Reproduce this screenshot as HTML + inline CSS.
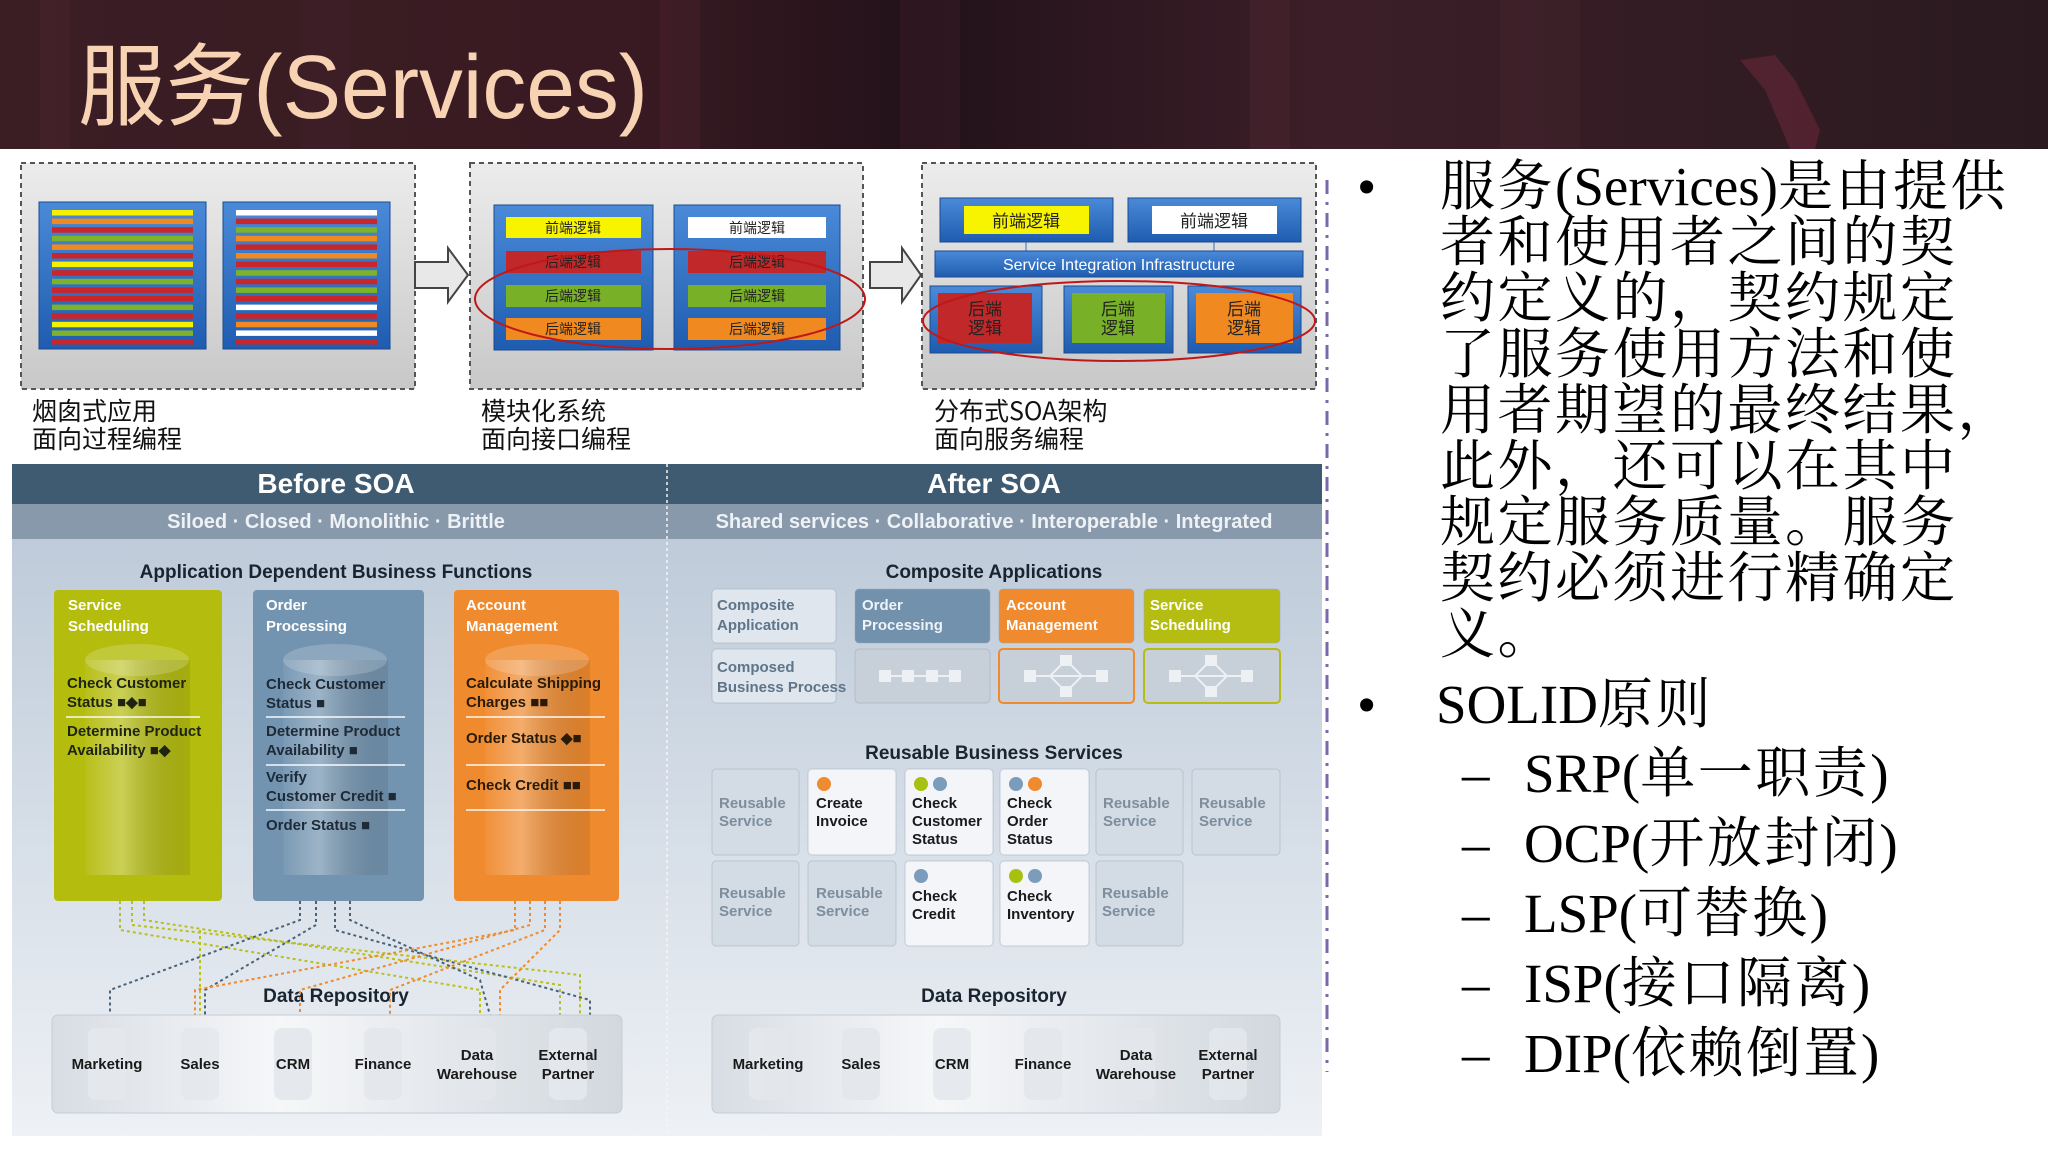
<!DOCTYPE html>
<html><head><meta charset="utf-8">
<style>
html,body{margin:0;padding:0;background:#fff;}
body{width:2048px;height:1151px;position:relative;overflow:hidden;}
svg{position:absolute;left:0;top:0;}
.rt{position:absolute;font-family:"Liberation Serif","Noto Serif CJK SC",serif;color:#000;font-size:55px;line-height:56px;white-space:nowrap;letter-spacing:2.5px;}
.rt span{letter-spacing:0;}
</style></head>
<body>
<svg width="2048" height="1151" viewBox="0 0 2048 1151" font-family="'Liberation Sans Narrow','Liberation Sans',sans-serif">
<defs>
<linearGradient id="hdr" x1="0" x2="1" y1="0" y2="0">
<stop offset="0" stop-color="#3a1e24"/><stop offset="0.3" stop-color="#3a1a22"/><stop offset="0.45" stop-color="#22121a"/><stop offset="0.65" stop-color="#3c1e28"/><stop offset="1" stop-color="#2a1a20"/>
</linearGradient>
<linearGradient id="gbox" x1="0" y1="0" x2="0" y2="1"><stop offset="0" stop-color="#ececec"/><stop offset="1" stop-color="#c8c8c8"/></linearGradient>
<linearGradient id="blue" x1="0" y1="0" x2="0" y2="1"><stop offset="0" stop-color="#4a8ad8"/><stop offset="1" stop-color="#1f5cb0"/></linearGradient>
<linearGradient id="body" x1="0" y1="0" x2="0" y2="1"><stop offset="0" stop-color="#b9c6d6"/><stop offset="0.5" stop-color="#d3dce6"/><stop offset="1" stop-color="#eef1f5"/></linearGradient>
<linearGradient id="cyl" x1="0" x2="1"><stop offset="0" stop-color="#fff" stop-opacity="0.05"/><stop offset="0.35" stop-color="#fff" stop-opacity="0.3"/><stop offset="1" stop-color="#000" stop-opacity="0.08"/></linearGradient>
<linearGradient id="rep" x1="0" x2="1"><stop offset="0" stop-color="#d8dde3"/><stop offset="0.4" stop-color="#f6f7f9"/><stop offset="1" stop-color="#d2d8de"/></linearGradient>
</defs>
<rect x="0" y="0" width="2048" height="149" fill="url(#hdr)"/>
<g opacity="0.25">
<rect x="40" y="0" width="30" height="149" fill="#5a2a34"/><rect x="300" y="0" width="50" height="149" fill="#4a2430"/><rect x="660" y="0" width="40" height="149" fill="#5a2836"/><rect x="900" y="0" width="60" height="149" fill="#4a2230"/><rect x="1250" y="0" width="40" height="149" fill="#5a2a36"/><rect x="1500" y="0" width="80" height="149" fill="#4e2a34"/>
</g>
<path d="M1740 60 L1775 55 L1795 80 L1820 130 L1815 149 L1790 149 L1765 90 Z" fill="#7a2a3e" opacity="0.45"/>
<text x="78" y="118" font-family="'Liberation Sans','Noto Sans CJK SC',sans-serif" font-size="90" fill="#f7d3b3" textLength="570" lengthAdjust="spacingAndGlyphs">服务(Services)</text>

<g stroke="#555" stroke-width="2" stroke-dasharray="5,4">
<rect x="21" y="163" width="394" height="226" fill="url(#gbox)"/>
<rect x="470" y="163" width="393" height="226" fill="url(#gbox)"/>
<rect x="922" y="163" width="394" height="226" fill="url(#gbox)"/>
</g>
<rect x="39" y="202" width="167" height="147" fill="url(#blue)" stroke="#1a4a90"/>
<rect x="223" y="202" width="167" height="147" fill="url(#blue)" stroke="#1a4a90"/>
<g>
<rect x="52" y="210" width="141" height="5.5" fill="#f4f000"/><rect x="52" y="218.6" width="141" height="5.5" fill="#f08a20"/><rect x="52" y="227.2" width="141" height="5.5" fill="#c8262a"/><rect x="52" y="235.8" width="141" height="5.5" fill="#7cb32a"/><rect x="52" y="244.4" width="141" height="5.5" fill="#f08a20"/><rect x="52" y="253" width="141" height="5.5" fill="#c8262a"/><rect x="52" y="261.6" width="141" height="5.5" fill="#f4f000"/><rect x="52" y="270.2" width="141" height="5.5" fill="#c8262a"/><rect x="52" y="278.8" width="141" height="5.5" fill="#7cb32a"/><rect x="52" y="287.4" width="141" height="5.5" fill="#c8262a"/><rect x="52" y="296" width="141" height="5.5" fill="#c8262a"/><rect x="52" y="304.6" width="141" height="5.5" fill="#7cb32a"/><rect x="52" y="313.2" width="141" height="5.5" fill="#c8262a"/><rect x="52" y="321.8" width="141" height="5.5" fill="#f4f000"/><rect x="52" y="330.4" width="141" height="5.5" fill="#7cb32a"/><rect x="52" y="339" width="141" height="5.5" fill="#c8262a"/>
<rect x="236" y="210" width="141" height="5.5" fill="#fff"/><rect x="236" y="218.6" width="141" height="5.5" fill="#c8262a"/><rect x="236" y="227.2" width="141" height="5.5" fill="#7cb32a"/><rect x="236" y="235.8" width="141" height="5.5" fill="#f08a20"/><rect x="236" y="244.4" width="141" height="5.5" fill="#c8262a"/><rect x="236" y="253" width="141" height="5.5" fill="#f08a20"/><rect x="236" y="261.6" width="141" height="5.5" fill="#c8262a"/><rect x="236" y="270.2" width="141" height="5.5" fill="#7cb32a"/><rect x="236" y="278.8" width="141" height="5.5" fill="#c8262a"/><rect x="236" y="287.4" width="141" height="5.5" fill="#7cb32a"/><rect x="236" y="296" width="141" height="5.5" fill="#c8262a"/><rect x="236" y="304.6" width="141" height="5.5" fill="#fff"/><rect x="236" y="313.2" width="141" height="5.5" fill="#c8262a"/><rect x="236" y="321.8" width="141" height="5.5" fill="#f08a20"/><rect x="236" y="330.4" width="141" height="5.5" fill="#fff"/><rect x="236" y="339" width="141" height="5.5" fill="#c8262a"/>
</g>
<path d="M415 262 L448 262 L448 248 L468 275 L448 302 L448 288 L415 288 Z" fill="#e8e8e8" stroke="#444" stroke-width="2"/>
<path d="M870 262 L902 262 L902 248 L921 275 L902 302 L902 288 L870 288 Z" fill="#e8e8e8" stroke="#444" stroke-width="2"/>
<g font-family="'Noto Sans CJK SC',sans-serif" font-size="14" text-anchor="middle" fill="#222">
<rect x="494" y="205" width="159" height="145" fill="url(#blue)" stroke="#1a4a90"/>
<rect x="674" y="205" width="166" height="145" fill="url(#blue)" stroke="#1a4a90"/>
<rect x="506" y="217" width="135" height="21" fill="#f8f400"/><text x="573" y="233">前端逻辑</text>
<rect x="506" y="251" width="135" height="22" fill="#c0282a"/><text x="573" y="267">后端逻辑</text>
<rect x="506" y="285" width="135" height="22" fill="#78b028"/><text x="573" y="301">后端逻辑</text>
<rect x="506" y="318" width="135" height="22" fill="#f08a20"/><text x="573" y="334">后端逻辑</text>
<rect x="688" y="217" width="138" height="21" fill="#fff"/><text x="757" y="233">前端逻辑</text>
<rect x="688" y="251" width="138" height="22" fill="#c0282a"/><text x="757" y="267">后端逻辑</text>
<rect x="688" y="285" width="138" height="22" fill="#78b028"/><text x="757" y="301">后端逻辑</text>
<rect x="688" y="318" width="138" height="22" fill="#f08a20"/><text x="757" y="334">后端逻辑</text>
</g>
<ellipse cx="670" cy="299" rx="195" ry="50" fill="none" stroke="#c01818" stroke-width="2"/>
<g font-family="'Noto Sans CJK SC',sans-serif" text-anchor="middle" fill="#222">
<rect x="940" y="198" width="173" height="44" fill="url(#blue)" stroke="#1a4a90"/>
<rect x="1128" y="198" width="173" height="44" fill="url(#blue)" stroke="#1a4a90"/>
<rect x="964" y="206" width="125" height="28" fill="#f8f400"/><text x="1026" y="227" font-size="17">前端逻辑</text>
<rect x="1152" y="206" width="125" height="28" fill="#fff"/><text x="1214" y="227" font-size="17">前端逻辑</text>
<line x1="1026" y1="242" x2="1026" y2="251" stroke="#3a6ab8"/><line x1="1214" y1="242" x2="1214" y2="251" stroke="#3a6ab8"/>
<rect x="935" y="251" width="368" height="26" fill="url(#blue)" stroke="#1a4a90"/>
<text x="1119" y="270" font-family="'Liberation Sans',sans-serif" font-size="16" fill="#fff">Service Integration Infrastructure</text>
<rect x="930" y="286" width="112" height="67" fill="url(#blue)" stroke="#1a4a90"/>
<rect x="1064" y="286" width="109" height="67" fill="url(#blue)" stroke="#1a4a90"/>
<rect x="1188" y="286" width="113" height="67" fill="url(#blue)" stroke="#1a4a90"/>
<rect x="938" y="293" width="94" height="50" fill="#c0282a"/><text x="985" y="315" font-size="17">后端</text><text x="985" y="334" font-size="17">逻辑</text>
<rect x="1072" y="293" width="93" height="50" fill="#78b028"/><text x="1118" y="315" font-size="17">后端</text><text x="1118" y="334" font-size="17">逻辑</text>
<rect x="1196" y="293" width="97" height="50" fill="#f08a20"/><text x="1244" y="315" font-size="17">后端</text><text x="1244" y="334" font-size="17">逻辑</text>
</g>
<ellipse cx="1119" cy="321" rx="196" ry="40" fill="none" stroke="#c01818" stroke-width="2"/>
<g font-family="'Noto Sans CJK SC',sans-serif" font-size="25" fill="#111">
<text x="32" y="420">烟囱式应用</text><text x="32" y="448">面向过程编程</text>
<text x="481" y="420">模块化系统</text><text x="481" y="448">面向接口编程</text>
<text x="934" y="420">分布式SOA架构</text><text x="934" y="448">面向服务编程</text>
</g>

<rect x="12" y="464" width="1310" height="672" fill="url(#body)"/>
<rect x="12" y="464" width="1310" height="40" fill="#3f5b72"/>
<rect x="12" y="504" width="1310" height="35" fill="#8799aa"/>
<line x1="667" y1="464" x2="667" y2="1136" stroke="#f4f6f8" stroke-width="1.5" stroke-dasharray="3,3"/>
<g font-weight="bold" text-anchor="middle">
<text x="336" y="493" font-size="28" fill="#fff">Before SOA</text>
<text x="994" y="493" font-size="28" fill="#fff">After SOA</text>
<text x="336" y="528" font-size="20" fill="#eef2f6">Siloed · Closed · Monolithic · Brittle</text>
<text x="994" y="528" font-size="20" fill="#eef2f6">Shared services · Collaborative · Interoperable · Integrated</text>
<text x="336" y="578" font-size="19" fill="#1a2430">Application Dependent Business Functions</text>
<text x="994" y="578" font-size="19" fill="#1a2430">Composite Applications</text>
<text x="994" y="759" font-size="19" fill="#1a2430">Reusable Business Services</text>
<text x="336" y="1002" font-size="19" fill="#1a2430">Data Repository</text>
<text x="994" y="1002" font-size="19" fill="#1a2430">Data Repository</text>
</g>
<g fill="none" stroke-width="2" stroke-dasharray="3,3">
<g stroke="#b8c020"><path d="M120 901 L120 930 L480 990 L480 1015"/><path d="M132 901 L132 925 L580 975 L580 1015"/><path d="M144 901 L144 920 L560 985 L560 1015"/><path d="M200 930 L200 1015"/></g>
<g stroke="#4a6278"><path d="M300 901 L300 920 L110 990 L110 1015"/><path d="M316 901 L316 925 L205 990 L205 1015"/><path d="M335 901 L335 930 L590 1000 L590 1015"/><path d="M350 901 L350 920 L480 980 L490 1015"/></g>
<g stroke="#f08a2c"><path d="M515 901 L515 930 L195 990 L195 1015"/><path d="M530 901 L530 925 L300 990 L300 1015"/><path d="M545 901 L545 930 L390 990 L390 1015"/><path d="M560 901 L560 930 L500 990 L500 1015"/></g>
</g>
<rect x="54" y="590" width="168" height="311" rx="4" fill="#b4bc0e"/>
<rect x="253" y="590" width="171" height="311" rx="4" fill="#7394b0"/>
<rect x="454" y="590" width="165" height="311" rx="4" fill="#ef8a2e"/>
<g fill="url(#cyl)"><rect x="85" y="660" width="105" height="215"/><rect x="283" y="660" width="105" height="215"/><rect x="485" y="660" width="105" height="215"/></g>
<g fill="#ffffff" opacity="0.18"><ellipse cx="137" cy="660" rx="52" ry="16"/><ellipse cx="335" cy="660" rx="52" ry="16"/><ellipse cx="537" cy="660" rx="52" ry="16"/></g>
<g font-size="15" font-weight="bold">
<text x="68" y="610" fill="#fff">Service</text><text x="68" y="631" fill="#fff">Scheduling</text>
<text x="67" y="688" fill="#1e2410">Check Customer</text><text x="67" y="707" fill="#1e2410">Status ■◆■</text>
<text x="67" y="736" fill="#1e2410">Determine Product</text><text x="67" y="755" fill="#1e2410">Availability ■◆</text>
<text x="266" y="610" fill="#fff">Order</text><text x="266" y="631" fill="#fff">Processing</text>
<text x="266" y="689" fill="#1e2a36">Check Customer</text><text x="266" y="708" fill="#1e2a36">Status ■</text>
<text x="266" y="736" fill="#1e2a36">Determine Product</text><text x="266" y="755" fill="#1e2a36">Availability ■</text>
<text x="266" y="782" fill="#1e2a36">Verify</text><text x="266" y="801" fill="#1e2a36">Customer Credit ■</text>
<text x="266" y="830" fill="#1e2a36">Order Status ■</text>
<text x="466" y="610" fill="#fff">Account</text><text x="466" y="631" fill="#fff">Management</text>
<text x="466" y="688" fill="#2a1a08">Calculate Shipping</text><text x="466" y="707" fill="#2a1a08">Charges ■■</text>
<text x="466" y="743" fill="#2a1a08">Order Status ◆■</text>
<text x="466" y="790" fill="#2a1a08">Check Credit ■■</text>
</g>
<g stroke="#fff" stroke-opacity="0.7" stroke-width="2">
<line x1="66" y1="717" x2="200" y2="717"/>
<line x1="266" y1="717" x2="405" y2="717"/><line x1="266" y1="765" x2="405" y2="765"/><line x1="266" y1="810" x2="405" y2="810"/>
<line x1="466" y1="717" x2="605" y2="717"/><line x1="466" y1="765" x2="605" y2="765"/><line x1="466" y1="810" x2="605" y2="810"/>
</g>
<rect x="52" y="1015" width="570" height="98" rx="6" fill="url(#rep)" stroke="#c4ccd4"/>
<rect x="712" y="1015" width="568" height="98" rx="6" fill="url(#rep)" stroke="#c4ccd4"/>
<g fill="#e4e8ec" opacity="0.9">
<rect x="88" y="1028" width="38" height="72" rx="8"/><rect x="181" y="1028" width="38" height="72" rx="8"/><rect x="274" y="1028" width="38" height="72" rx="8"/><rect x="364" y="1028" width="38" height="72" rx="8"/><rect x="458" y="1028" width="38" height="72" rx="8"/><rect x="549" y="1028" width="38" height="72" rx="8"/>
<rect x="749" y="1028" width="38" height="72" rx="8"/><rect x="842" y="1028" width="38" height="72" rx="8"/><rect x="933" y="1028" width="38" height="72" rx="8"/><rect x="1024" y="1028" width="38" height="72" rx="8"/><rect x="1117" y="1028" width="38" height="72" rx="8"/><rect x="1209" y="1028" width="38" height="72" rx="8"/>
</g>
<g font-size="15" font-weight="bold" fill="#1a1a1a" text-anchor="middle">
<text x="107" y="1069">Marketing</text><text x="200" y="1069">Sales</text><text x="293" y="1069">CRM</text><text x="383" y="1069">Finance</text><text x="477" y="1060">Data</text><text x="477" y="1079">Warehouse</text><text x="568" y="1060">External</text><text x="568" y="1079">Partner</text>
<text x="768" y="1069">Marketing</text><text x="861" y="1069">Sales</text><text x="952" y="1069">CRM</text><text x="1043" y="1069">Finance</text><text x="1136" y="1060">Data</text><text x="1136" y="1079">Warehouse</text><text x="1228" y="1060">External</text><text x="1228" y="1079">Partner</text>
</g>
<g stroke="#9aa8b6" stroke-opacity="0.5">
<rect x="712" y="589" width="124" height="54" rx="4" fill="#dfe6ee"/>
<rect x="855" y="589" width="135" height="54" rx="4" fill="#7191ad"/>
<rect x="999" y="589" width="135" height="54" rx="4" fill="#ef8a2e"/>
<rect x="1144" y="589" width="136" height="54" rx="4" fill="#b6bd12"/>
<rect x="712" y="649" width="124" height="54" rx="4" fill="#dfe6ee"/>
<rect x="855" y="649" width="135" height="54" rx="4" fill="#c7cfd8"/>
</g>
<rect x="999" y="649" width="135" height="54" rx="4" fill="#c7cfd8" stroke="#ef8a2e" stroke-width="2"/>
<rect x="1144" y="649" width="136" height="54" rx="4" fill="#c7cfd8" stroke="#b6bd12" stroke-width="2"/>
<g font-size="15" font-weight="bold">
<text x="717" y="610" fill="#5e7488">Composite</text><text x="717" y="630" fill="#5e7488">Application</text>
<text x="862" y="610" fill="#eef3f8">Order</text><text x="862" y="630" fill="#eef3f8">Processing</text>
<text x="1006" y="610" fill="#fff">Account</text><text x="1006" y="630" fill="#fff">Management</text>
<text x="1150" y="610" fill="#fff">Service</text><text x="1150" y="630" fill="#fff">Scheduling</text>
<text x="717" y="672" fill="#5e7488">Composed</text><text x="717" y="692" fill="#5e7488">Business Process</text>
</g>
<g fill="#eef1f4" stroke="#eef1f4" stroke-width="2">
<line x1="885" y1="676" x2="960" y2="676"/><rect x="880" y="671" width="10" height="10"/><rect x="903" y="671" width="10" height="10"/><rect x="927" y="671" width="10" height="10"/><rect x="950" y="671" width="10" height="10"/>
<line x1="1030" y1="676" x2="1105" y2="676"/><rect x="1025" y="671" width="10" height="10"/><rect x="1097" y="671" width="10" height="10"/><polygon points="1050,676 1066,660 1082,676 1066,692" fill="none"/><rect x="1061" y="656" width="10" height="9"/><rect x="1061" y="687" width="10" height="9"/>
<line x1="1175" y1="676" x2="1250" y2="676"/><rect x="1170" y="671" width="10" height="10"/><rect x="1242" y="671" width="10" height="10"/><polygon points="1195,676 1211,660 1227,676 1211,692" fill="none"/><rect x="1206" y="656" width="10" height="9"/><rect x="1206" y="687" width="10" height="9"/>
</g>
<g stroke="#a8b4c0" stroke-opacity="0.6">
<rect x="712" y="769" width="87" height="86" rx="4" fill="#d3dbe4"/>
<rect x="808" y="769" width="88" height="86" rx="4" fill="#f3f5f8"/>
<rect x="905" y="769" width="88" height="86" rx="4" fill="#f3f5f8"/>
<rect x="1000" y="769" width="89" height="86" rx="4" fill="#f3f5f8"/>
<rect x="1096" y="769" width="87" height="86" rx="4" fill="#d3dbe4"/>
<rect x="1192" y="769" width="88" height="86" rx="4" fill="#d3dbe4"/>
<rect x="712" y="861" width="87" height="85" rx="4" fill="#d3dbe4"/>
<rect x="808" y="861" width="88" height="85" rx="4" fill="#d3dbe4"/>
<rect x="905" y="861" width="88" height="85" rx="4" fill="#f3f5f8"/>
<rect x="1000" y="861" width="89" height="85" rx="4" fill="#f3f5f8"/>
<rect x="1096" y="861" width="87" height="85" rx="4" fill="#d3dbe4"/>
</g>
<g>
<circle cx="824" cy="784" r="7" fill="#ef8a2e"/>
<circle cx="921" cy="784" r="7" fill="#a8c010"/><circle cx="940" cy="784" r="7" fill="#7b9cba"/>
<circle cx="1016" cy="784" r="7" fill="#7b9cba"/><circle cx="1035" cy="784" r="7" fill="#ef8a2e"/>
<circle cx="921" cy="876" r="7" fill="#7b9cba"/>
<circle cx="1016" cy="876" r="7" fill="#a8c010"/><circle cx="1035" cy="876" r="7" fill="#7b9cba"/>
</g>
<g font-size="15" font-weight="bold">
<g fill="#7d8e9e"><text x="719" y="808">Reusable</text><text x="719" y="826">Service</text>
<text x="1103" y="808">Reusable</text><text x="1103" y="826">Service</text>
<text x="1199" y="808">Reusable</text><text x="1199" y="826">Service</text>
<text x="719" y="898">Reusable</text><text x="719" y="916">Service</text>
<text x="816" y="898">Reusable</text><text x="816" y="916">Service</text>
<text x="1102" y="898">Reusable</text><text x="1102" y="916">Service</text></g>
<g fill="#1a1a1a"><text x="816" y="808">Create</text><text x="816" y="826">Invoice</text>
<text x="912" y="808">Check</text><text x="912" y="826">Customer</text><text x="912" y="844">Status</text>
<text x="1007" y="808">Check</text><text x="1007" y="826">Order</text><text x="1007" y="844">Status</text>
<text x="912" y="901">Check</text><text x="912" y="919">Credit</text>
<text x="1007" y="901">Check</text><text x="1007" y="919">Inventory</text></g>
</g>
<line x1="1327" y1="180" x2="1327" y2="1072" stroke="#7a68aa" stroke-width="3" stroke-dasharray="14,8,3,8"/>
</svg>

<div class="rt" style="left:1357px;top:159px;">•</div>
<div class="rt" style="left:1440px;top:159px;">服务<span>(Services)</span>是由提供<br>者和使用者之间的契<br>约定义的，契约规定<br>了服务使用方法和使<br>用者期望的最终结果，<br>此外，还可以在其中<br>规定服务质量。服务<br>契约必须进行精确定<br>义。</div>
<div class="rt" style="left:1357px;top:677px;">•</div>
<div class="rt" style="left:1436px;top:677px;"><span>SOLID</span>原则</div>
<div class="rt" style="left:1462px;top:746px;">–</div><div class="rt" style="left:1524px;top:746px;"><span>SRP(</span>单一职责<span>)</span></div>
<div class="rt" style="left:1462px;top:816px;">–</div><div class="rt" style="left:1524px;top:816px;"><span>OCP(</span>开放封闭<span>)</span></div>
<div class="rt" style="left:1462px;top:886px;">–</div><div class="rt" style="left:1524px;top:886px;"><span>LSP(</span>可替换<span>)</span></div>
<div class="rt" style="left:1462px;top:956px;">–</div><div class="rt" style="left:1524px;top:956px;"><span>ISP(</span>接口隔离<span>)</span></div>
<div class="rt" style="left:1462px;top:1026px;">–</div><div class="rt" style="left:1524px;top:1026px;"><span>DIP(</span>依赖倒置<span>)</span></div>
</body></html>
